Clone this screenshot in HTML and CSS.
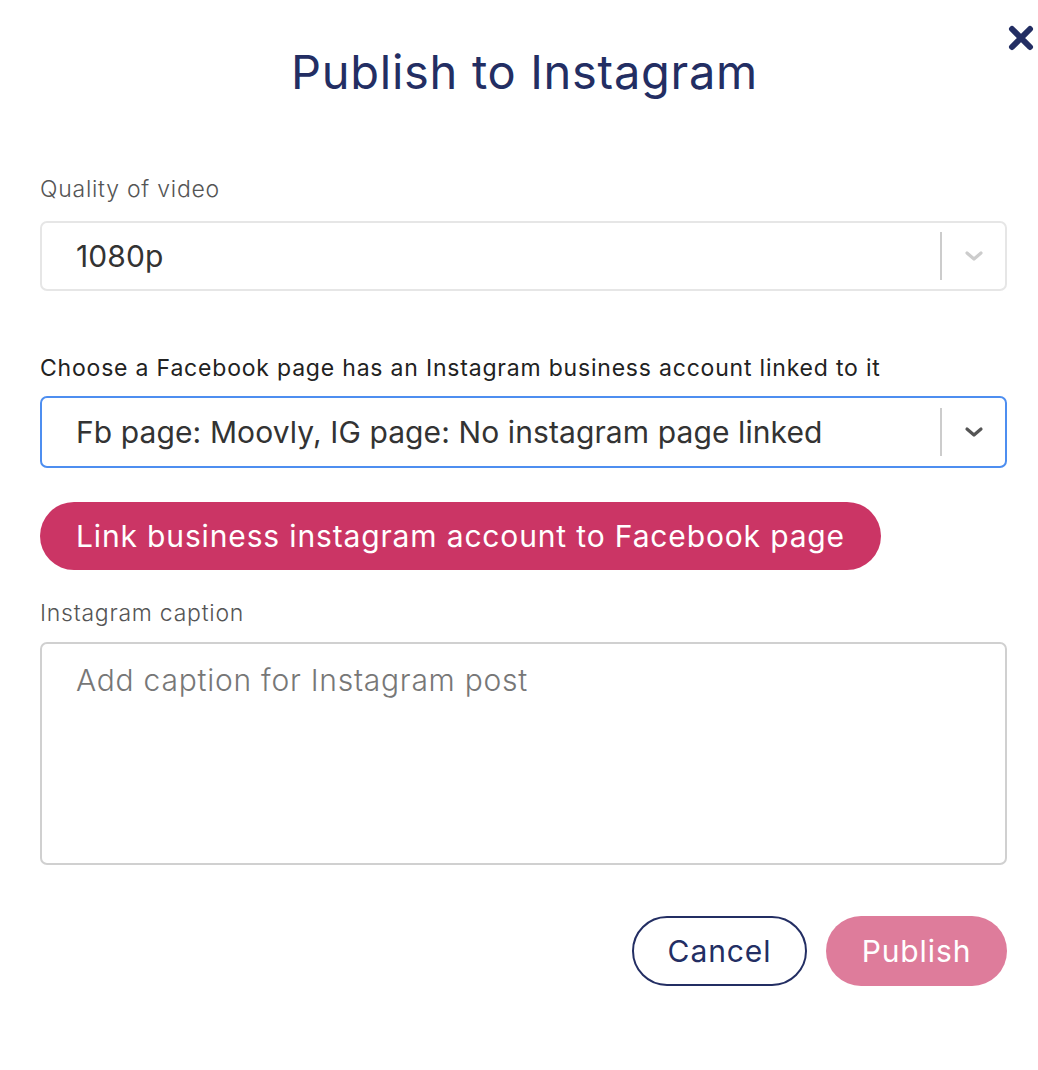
FILE: index.html
```html
<!DOCTYPE html>
<html lang="en">
<head>
<meta charset="utf-8">
<title>Publish to Instagram</title>
<link rel="stylesheet" href="styles.css">
</head>
<body>
<div class="modal">
  <button class="close" aria-label="Close">
    <svg width="26" height="26" viewBox="0 0 26 26"><path d="M4 4 L22 22 M22 4 L4 22" stroke="#232e63" stroke-width="6" stroke-linecap="round"/></svg>
  </button>
  <h1 class="title">Publish to Instagram</h1>

  <div class="field field-quality">
    <label class="label">Quality of video</label>
    <div class="select">
      <span class="select-value">1080p</span>
      <span class="select-sep"></span>
      <span class="select-arrow">
        <svg width="22" height="14" viewBox="0 0 22 14"><path d="M4 4 L11 10 L18 4" fill="none" stroke="#cccccc" stroke-width="3.2" stroke-linecap="round" stroke-linejoin="round"/></svg>
      </span>
    </div>
  </div>

  <div class="field field-page">
    <label class="label label-dark">Choose a Facebook page has an Instagram business account linked to it</label>
    <div class="select select-focus">
      <span class="select-value">Fb page: Moovly, IG page: No instagram page linked</span>
      <span class="select-sep"></span>
      <span class="select-arrow">
        <svg width="22" height="14" viewBox="0 0 22 14"><path d="M4 4 L11 10 L18 4" fill="none" stroke="#555555" stroke-width="3.2" stroke-linecap="round" stroke-linejoin="round"/></svg>
      </span>
    </div>
  </div>

  <button class="link-btn">Link business instagram account to Facebook page</button>

  <div class="field field-caption">
    <label class="label">Instagram caption</label>
    <div class="textarea"><span class="placeholder">Add caption for Instagram post</span></div>
  </div>

  <div class="actions">
    <button class="btn btn-cancel">Cancel</button>
    <button class="btn btn-publish">Publish</button>
  </div>
</div>
</body>
</html>
```
FILE: styles.css
```css
* { box-sizing: border-box; }
html, body { margin: 0; padding: 0; background: #ffffff; }
body { font-family: Inter, "Open Sans", "Liberation Sans", sans-serif; }
.modal {
  position: relative;
  width: 1038px;
  height: 1070px;
  padding: 44px 31px 0 40px;
}
.close {
  position: absolute;
  top: 25px;
  right: 2px;
  width: 30px;
  height: 26px;
  padding: 0;
  border: 0;
  background: none;
}
.title {
  margin: 0;
  text-align: center;
  font-weight: 400;
  font-size: 47px;
  line-height: 56px;
  letter-spacing: 0.7px;
  color: #232e63;
  padding-left: 2px;
}
.field { display: flex; flex-direction: column; }
.field-quality { margin-top: 75px; }
.field-page { margin-top: 63px; }
.field-caption { margin-top: 29px; }
.label {
  font-size: 23px;
  line-height: 28px;
  font-weight: 300;
  letter-spacing: 0.75px;
  color: #555555;
  margin-bottom: 18px;
}
.label-dark {
  color: #222222;
  font-weight: 400;
  letter-spacing: 0.8px;
  margin-bottom: 14px;
}
.field-caption .label { margin-bottom: 15px; }
.select {
  display: flex;
  align-items: center;
  height: 70px;
  border: 2px solid #e6e6e6;
  border-radius: 7px;
  padding-left: 34px;
}
.select-focus { border-color: #4d8ef0; height: 72px; }
.select-value {
  flex: 1;
  font-size: 30px;
  font-weight: 400;
  letter-spacing: 0.1px;
  color: #333333;
}
.select-sep {
  width: 2px;
  height: 48px;
  background: #cccccc;
}
.select-arrow {
  width: 63px;
  display: flex;
  justify-content: center;
  align-items: center;
}
.link-btn {
  display: block;
  margin-top: 34px;
  width: 841px;
  height: 68px;
  border: 0;
  border-radius: 34px;
  background: #cb3565;
  color: #ffffff;
  font-family: inherit;
  font-size: 30px;
  font-weight: 400;
  letter-spacing: 0.85px;
  padding: 0;
}
.textarea {
  height: 223px;
  border: 2px solid #d0d0d0;
  border-radius: 7px;
  padding: 18px 34px;
  line-height: 36px;
}
.placeholder {
  font-size: 30px;
  font-weight: 300;
  letter-spacing: 0.75px;
  color: #777777;
}
.actions {
  display: flex;
  justify-content: flex-end;
  gap: 19px;
  margin-top: 51px;
}
.btn {
  height: 70px;
  border-radius: 35px;
  font-family: inherit;
  font-size: 30px;
  font-weight: 400;
  letter-spacing: 0.9px;
  padding: 0;
}
.btn-cancel {
  width: 175px;
  border: 2px solid #232e63;
  background: #ffffff;
  color: #232e63;
}
.btn-publish {
  width: 181px;
  border: 0;
  background: #de7c9b;
  color: #ffffff;
}
```
